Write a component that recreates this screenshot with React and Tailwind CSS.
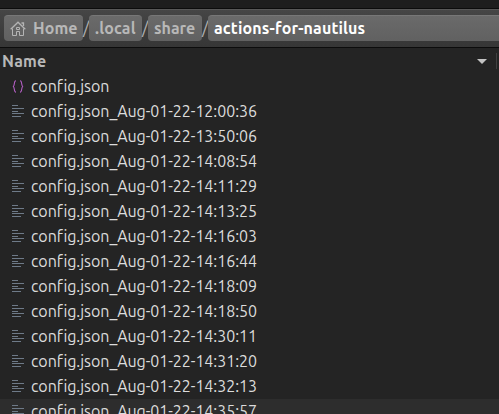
const files = [
  'config.json',
  'config.json_Aug-01-22-12:00:36',
  'config.json_Aug-01-22-13:50:06',
  'config.json_Aug-01-22-14:08:54',
  'config.json_Aug-01-22-14:11:29',
  'config.json_Aug-01-22-14:13:25',
  'config.json_Aug-01-22-14:16:03',
  'config.json_Aug-01-22-14:16:44',
  'config.json_Aug-01-22-14:18:09',
  'config.json_Aug-01-22-14:18:50',
  'config.json_Aug-01-22-14:30:11',
  'config.json_Aug-01-22-14:31:20',
  'config.json_Aug-01-22-14:32:13',
  'config.json_Aug-01-22-14:35:57',
];

function HomeIcon() {
  return (
    <svg className="mt-0.5 size-4 shrink-0" viewBox="0 0 16 16" fill="none" stroke="#b4b4b4">
      <path d="M0.7 8.3 8 1.2l7.3 7.1M11.5 2h2v3" strokeWidth="1.3" />
      <path d="M2.5 7.5v7h4v-4h3v4h4v-7" />
      <path d="M6.5 6.5h3v2h-3z" />
    </svg>
  );
}

function JsonIcon() {
  return (
    <svg className="h-[13px] w-3 shrink-0" viewBox="0 0 12 13" fill="none" stroke="#b45fc4" strokeWidth="1.1">
      <path d="M4 .8C2.700.8 2.500 2 2.300 3.700 2.200 5 1.900 5.800 1.300 6.500c.6.700.9 1.500 1 2.800.2 1.700.4 2.900 1.700 2.900" />
      <path d="M8 .8c1.300 0 1.500 1.200 1.700 2.900.1 1.300.4 2.100 1 2.800-.6.700-.9 1.500-1 2.800-.2 1.700-.4 2.900-1.700 2.900" />
    </svg>
  );
}

function TextIcon() {
  return (
    <svg className="h-[13px] w-3 shrink-0" viewBox="0 0 12 13" fill="#6e7a88" shapeRendering="crispEdges">
      <rect width="6" height="1" y="0" />
      <rect width="12" height="1" y="3" />
      <rect width="6" height="1" y="6" />
      <rect width="12" height="1" y="8" />
      <rect width="9" height="1" y="11" />
    </svg>
  );
}

const crumb =
  'flex h-[26px] shrink-0 items-center rounded-[4px] border-t border-[#777] bg-linear-to-b from-[#6a6a6a] to-[#616161] pb-px text-[16px] font-bold whitespace-nowrap';

function Slash() {
  return <span className="flex w-1.5 shrink-0 justify-center text-[17px] leading-[26px] text-[#b0b0b0]">/</span>;
}

export default function App() {
  return (
    <div className="h-[414px] w-[499px] overflow-hidden bg-[#242424] font-['Ubuntu','Noto_Sans',sans-serif] [font-variant-ligatures:none]">
      <div className="h-2 bg-[#1e1e1e]" />
      <nav className="flex h-10 items-start border-y border-[#0c0c0c] bg-linear-to-b from-[#464646] to-[#363636] shadow-[inset_0_1px_0_#585858]">
        <div className="flex h-full items-start pt-1.5 pl-1">
          <div className={`${crumb} w-[79px] gap-[7px] pl-1.5 tracking-[0.1px] text-[#b8b8b8]`}>
            <HomeIcon />
            <span>Home</span>
          </div>
          <Slash />
          <div className={`${crumb} w-[53px] pl-1.5 tracking-[0.2px] text-[#b8b8b8]`}>.local</div>
          <Slash />
          <div className={`${crumb} w-[54px] pl-1.5 text-[#b8b8b8]`}>share</div>
          <Slash />
          <div className={`${crumb} w-[300px] pl-1.5 tracking-[0.15px] text-white`}>actions-for-nautilus</div>
        </div>
      </nav>
      <div className="flex h-[26px] items-center justify-between pl-0.5 text-[16px] font-bold tracking-[0.2px] text-[#b8b8b8]">
        <span className="-mt-px">Name</span>
        <div className="mr-0.5 flex h-4 items-center gap-[9px] border-r border-[#404040] pr-[9px]">
          <svg className="h-[5px] w-2.5" viewBox="0 0 10 5" fill="#c4c4c4">
            <path d="M0 0h10L5 5z" />
          </svg>
        </div>
      </div>
      <ul className="text-[16px] tracking-[-0.05px] text-[#dcdcdc]">
        {files.map((name, i) => (
          <li
            key={name}
            className={`flex h-[25px] items-center gap-[7px] pl-3 whitespace-nowrap ${i === 13 ? 'bg-[#2d2d2d]' : ''}`}
          >
            {i === 0 ? <JsonIcon /> : <TextIcon />}
            <span className="pb-0.5">{name}</span>
          </li>
        ))}
      </ul>
    </div>
  );
}
